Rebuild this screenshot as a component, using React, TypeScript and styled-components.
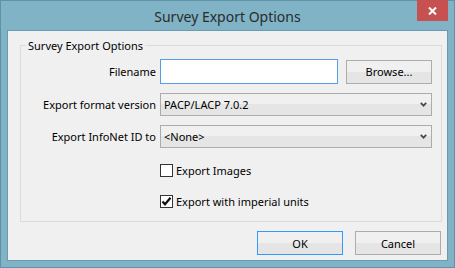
import React from 'react';
import styled, { createGlobalStyle } from 'styled-components';

const GlobalStyle = createGlobalStyle`
  html, body {
    margin: 0;
    padding: 0;
    background: #7fb3c5;
  }
  body {
    font-family: 'Noto Sans', 'Liberation Sans', sans-serif;
    font-size: 11px;
    color: #000;
  }
`;

function Chevron() {
  return (
    <svg width="7" height="5" viewBox="0 0 7 5">
      <path d="M0.8 0.8 L3.5 3.6 L6.2 0.8" fill="none" stroke="#4a4a4a" strokeWidth="1.8" />
    </svg>
  );
}

function Check() {
  return (
    <svg width="11" height="11" viewBox="0 0 11 11">
      <path d="M1.5 5.5 L4 8.3 L9.5 1.8" fill="none" stroke="#111" strokeWidth="2.2" />
    </svg>
  );
}

function CloseGlyph() {
  return (
    <svg width="9" height="8" viewBox="0 0 9 8">
      <path d="M1 0.5 L8 7.5 M8 0.5 L1 7.5" stroke="#fff" strokeWidth="2" />
    </svg>
  );
}

export default function App() {
  return (
    <>
      <GlobalStyle />
      <Window>
        <TitleBar>
          <Title>Survey Export Options</Title>
          <CloseButton>
            <CloseGlyph />
          </CloseButton>
        </TitleBar>
        <Client>
          <Group>
            <Legend>Survey Export Options</Legend>
            <FieldGrid>
              <Label>Filename</Label>
              <Inline>
                <TextBox />
                <Button $width={86}>Browse...</Button>
              </Inline>

              <Label>Export format version</Label>
              <Combo>
                <span>PACP/LACP 7.0.2</span>
                <Chevron />
              </Combo>

              <Label>Export InfoNet ID to</Label>
              <Combo>
                <span>&lt;None&gt;</span>
                <Chevron />
              </Combo>
            </FieldGrid>
            <CheckList>
              <CheckRow>
                <CheckBox />
                <span>Export Images</span>
              </CheckRow>
              <CheckRow>
                <CheckBox>
                  <Check />
                </CheckBox>
                <span>Export with imperial units</span>
              </CheckRow>
            </CheckList>
          </Group>
          <ButtonBar>
            <Button $width={86} $default>
              OK
            </Button>
            <Button $width={86}>Cancel</Button>
          </ButtonBar>
        </Client>
      </Window>
    </>
  );
}

const Window = styled.div`
  width: 455px;
  height: 268px;
  box-sizing: border-box;
  border: 1px solid #5f92a7;
  background: #7fb3c5;
  display: flex;
  flex-direction: column;
`;

const TitleBar = styled.div`
  position: relative;
  height: 29px;
  display: flex;
  align-items: center;
  justify-content: center;
`;

const Title = styled.div`
  font-size: 14px;
  color: #2b2b2b;
  margin-top: 2px;
`;

const CloseButton = styled.div`
  position: absolute;
  top: -1px;
  right: 6px;
  width: 31px;
  height: 21px;
  background: #c75050;
  display: flex;
  align-items: center;
  justify-content: center;
`;

const Client = styled.div`
  flex: 1;
  margin: 0 6px 6px;
  border: 1px solid #6a9ab0;
  background: #f0f0f0;
  display: flex;
  flex-direction: column;
`;

const Group = styled.fieldset`
  margin: 7px 5px 0 12px;
  padding: 0 9px 10px 0;
  border: 1px solid #dcdcdc;
  min-width: 0;
`;

const Legend = styled.legend`
  margin-left: 5px;
  padding: 0 2px;
  line-height: 15px;
`;

const FieldGrid = styled.div`
  display: grid;
  grid-template-columns: 135px 1fr;
  column-gap: 4px;
  row-gap: 9px;
  align-items: center;
  margin-top: 6px;
`;

const Label = styled.div`
  text-align: right;
  white-space: nowrap;
`;

const Inline = styled.div`
  display: flex;
  align-items: center;
  gap: 8px;
`;

const TextBox = styled.div`
  flex: 1;
  height: 25px;
  box-sizing: border-box;
  border: 1px solid #569de5;
  background: #fff;
`;

const Button = styled.div<{ $width: number; $default?: boolean }>`
  width: ${(p) => p.$width}px;
  height: 24px;
  box-sizing: border-box;
  border: 1px solid ${(p) => (p.$default ? '#3399ff' : '#acacac')};
  background: linear-gradient(#f0f0f0 0%, #f0f0f0 50%, #e5e5e5 50%, #e5e5e5 100%);
  display: flex;
  align-items: center;
  justify-content: center;
`;

const Combo = styled.div`
  height: 23px;
  box-sizing: border-box;
  border: 1px solid #acacac;
  background: linear-gradient(#f0f0f0 0%, #f0f0f0 50%, #e5e5e5 50%, #e5e5e5 100%);
  display: flex;
  align-items: center;
  justify-content: space-between;
  padding: 0 4px 0 3px;
`;

const CheckList = styled.div`
  display: flex;
  flex-direction: column;
  gap: 11px;
  margin-top: 12px;
  padding-left: 139px;
`;

const CheckRow = styled.div`
  height: 20px;
  display: flex;
  align-items: center;
  gap: 3px;
`;

const CheckBox = styled.div`
  width: 13px;
  height: 13px;
  box-sizing: border-box;
  border: 1px solid #333;
  background: #fff;
  display: flex;
  align-items: center;
  justify-content: center;
`;

const ButtonBar = styled.div`
  display: flex;
  justify-content: flex-end;
  gap: 12px;
  margin-top: 9px;
  padding-right: 6px;
`;
